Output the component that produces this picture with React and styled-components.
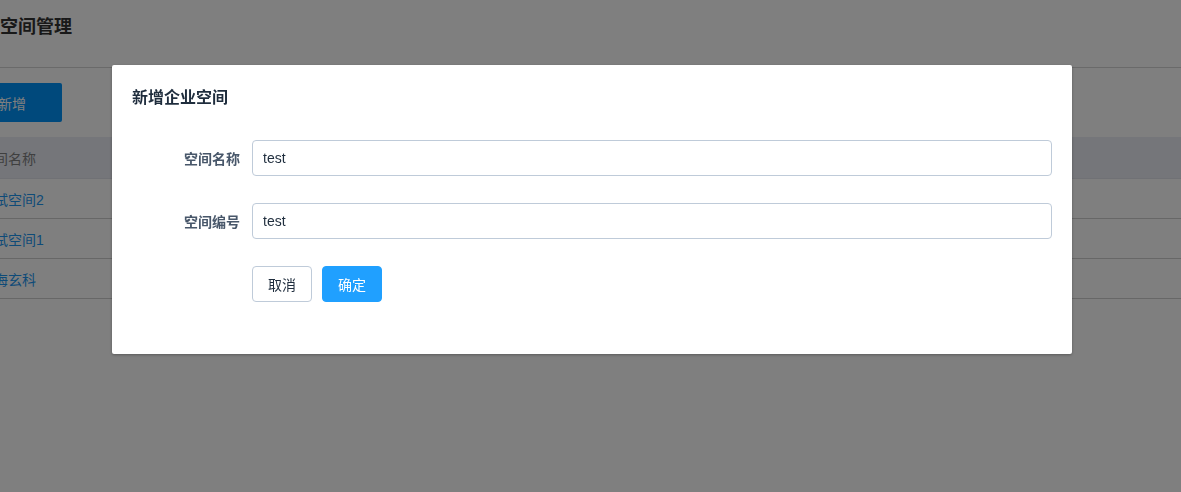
import React from "react";
import styled, { createGlobalStyle } from "styled-components";

const GlobalStyle = createGlobalStyle`
  html, body {
    margin: 0;
    padding: 0;
    background: #fff;
    overflow: hidden;
  }
  body {
    font-family: "Liberation Sans", "Noto Sans CJK SC", sans-serif;
    font-size: 14px;
    color: #1f2d3d;
  }
`;

const rows = ["测试空间2", "测试空间1", "上海玄科"];

const App = () => {
  return (
    <>
      <GlobalStyle />
      <Page>
        <Header>
          <h2>空间管理</h2>
        </Header>
        <Toolbar>
          <AddBtn>新增</AddBtn>
        </Toolbar>
        <Table>
          <div className="head">空间名称</div>
          {rows.map((name) => (
            <div className="row" key={name}>
              <a>{name}</a>
            </div>
          ))}
        </Table>
      </Page>

      <Mask>
        <Dialog>
          <DialogHeader>新增企业空间</DialogHeader>
          <DialogBody>
            <FormItem>
              <Label>空间名称</Label>
              <Input defaultValue="test" />
            </FormItem>
            <FormItem>
              <Label>空间编号</Label>
              <Input defaultValue="test" />
            </FormItem>
            <FormItem>
              <Label />
              <Button>取消</Button>
              <Button primary>确定</Button>
            </FormItem>
          </DialogBody>
        </Dialog>
      </Mask>
    </>
  );
};

const Page = styled.div`
  margin-left: -38px;
  width: calc(100vw + 38px);
  height: 100vh;
`;

const Header = styled.div`
  height: 68px;
  padding: 18px 0 0 38px;
  border-bottom: 1px solid #d4d4d4;
  box-sizing: border-box;
  h2 {
    margin: 0;
    font-size: 18px;
    line-height: 18px;
    font-weight: 700;
    color: #333;
  }
`;

const Toolbar = styled.div`
  padding: 15px 0;
  display: flex;
`;

const AddBtn = styled.button`
  width: 100px;
  height: 39px;
  border: 0;
  border-radius: 2px;
  background: #0092f8;
  color: #fff;
  font-family: inherit;
  font-size: 14px;
`;

const Table = styled.div`
  width: 100%;
  .head,
  .row {
    height: 40px;
    padding-left: 18px;
    display: flex;
    align-items: center;
    box-sizing: border-box;
    border-bottom: 1px solid #cfcfcf;
  }
  .head {
    height: 42px;
    background: #eaecf4;
    color: #7f7f7f;
    border-bottom: 1px solid #e0e2ea;
  }
  .row a {
    color: #1c96f0;
    cursor: pointer;
  }
`;

const Mask = styled.div`
  position: fixed;
  inset: 0;
  background: rgba(0, 0, 0, 0.5);
`;

const Dialog = styled.div`
  position: absolute;
  left: 112px;
  top: 65px;
  width: 960px;
  background: #fff;
  border-radius: 2px;
  box-shadow: 0 1px 3px rgba(0, 0, 0, 0.3);
`;

const DialogHeader = styled.div`
  padding: 20px 20px 0;
  height: 25px;
  line-height: 25px;
  font-size: 16px;
  font-weight: 700;
  color: #1f2d3d;
`;

const DialogBody = styled.div`
  padding: 30px 20px 30px;
  display: flex;
  flex-direction: column;
  gap: 27px;
`;

const FormItem = styled.div`
  display: flex;
  align-items: center;
  gap: 10px;
  &:last-child {
    margin-bottom: 22px;
  }
`;

const Label = styled.label`
  width: 120px;
  margin-right: -10px;
  padding-right: 12px;
  box-sizing: border-box;
  text-align: right;
  font-size: 14px;
  font-weight: 600;
  color: #48576a;
`;

const Input = styled.input`
  flex: 1;
  height: 36px;
  padding: 0 10px;
  box-sizing: border-box;
  border: 1px solid #bfcbd9;
  border-radius: 4px;
  font-family: inherit;
  font-size: 14px;
  color: #1f2d3d;
  outline: none;
`;

const Button = styled.button`
  width: 60px;
  height: 36px;
  border-radius: 4px;
  border: 1px solid ${(p) => (p.primary ? "#20a0ff" : "#bfcbd9")};
  background: ${(p) => (p.primary ? "#20a0ff" : "#fff")};
  color: ${(p) => (p.primary ? "#fff" : "#1f2d3d")};
  font-family: inherit;
  font-size: 14px;
  cursor: pointer;
`;

export default App;
